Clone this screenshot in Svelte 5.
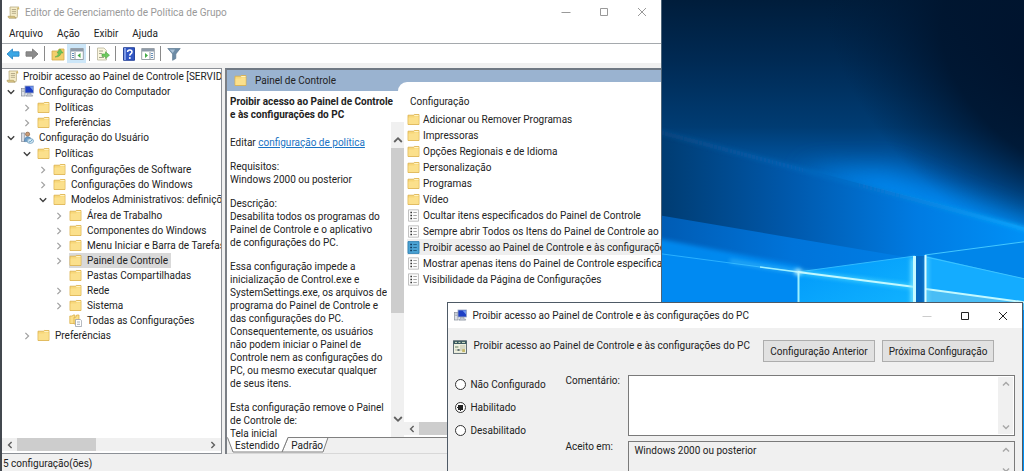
<script>
  const computerChildren = ['Políticas', 'Preferências'];
  const templates = [
    { label: 'Área de Trabalho', chevron: true },
    { label: 'Componentes do Windows', chevron: true },
    { label: 'Menu Iniciar e Barra de Tarefas', chevron: true },
    { label: 'Painel de Controle', chevron: true, selected: true },
    { label: 'Pastas Compartilhadas', chevron: false },
    { label: 'Rede', chevron: true },
    { label: 'Sistema', chevron: true },
    { label: 'Todas as Configurações', chevron: false, icon: 'all' }
  ];
  const folders = [
    'Adicionar ou Remover Programas',
    'Impressoras',
    'Opções Regionais e de Idioma',
    'Personalização',
    'Programas',
    'Vídeo'
  ];
  const settings = [
    'Ocultar itens especificados do Painel de Controle',
    'Sempre abrir Todos os Itens do Painel de Controle ao',
    'Proibir acesso ao Painel de Controle e às configurações',
    'Mostrar apenas itens do Painel de Controle especifica',
    'Visibilidade da Página de Configurações'
  ];
  const policy = 'Proibir acesso ao Painel de Controle e às configurações do PC';
  const states = ['Não Configurado', 'Habilitado', 'Desabilitado'];
  let state = $state('Habilitado');
  let current = $state(2);
  let comment = $state('');
</script>

{#snippet icon(name)}
  {#if name === 'folder'}
    <svg class="icon" viewBox="0 0 13 13" aria-hidden="true">
      <path d="M1 2.200V11.500H12V1.500H7.200L6.400 2.200Z" fill="#f7d779" stroke="#dcb04a" stroke-width=".8" />
      <path d="M1.500 4.500H7L8 3.600H11.600V11H1.500Z" fill="#fbe08c" />
      <path d="M7.500 2H11.500V3H7Z" fill="#fff3c4" />
    </svg>
  {:else if name === 'all'}
    <svg class="icon" viewBox="0 0 13 13" aria-hidden="true">
      <path d="M.8 2V9.5H6V1H4L3.4 2Z" fill="#fbe08c" stroke="#d9ab3c" stroke-width=".7" />
      <path d="M5 3.2V10H10V1H7.6L7 3.2Z" fill="#fbe08c" stroke="#d9ab3c" stroke-width=".7" />
      <path d="M6.5 5.5H11.5L12.6 6.8V12.5H6.5Z" fill="#fff" stroke="#9a9fa8" stroke-width=".8" />
      <path d="M8 8H11M8 10.3H11" stroke="#8b9bb0" stroke-width=".8" />
    </svg>
  {:else if name === 'scroll'}
    <svg class="icon" viewBox="0 0 13 13" aria-hidden="true">
      <path d="M3 1H11.5Q10.4 1.6 10.4 3V10.5Q10.4 12 9 12H2Q3.2 11.4 3.2 10Z" fill="#f5ecc8" stroke="#b9ac80" stroke-width=".8" />
      <path d="M1 10.3H7.6Q7.6 12 9 12H2.2Q1 12 1 10.3Z" fill="#e3cf8d" stroke="#b09c60" stroke-width=".7" />
      <path d="M4.8 3.5H9M4.8 5.4H9M4.8 7.3H9" stroke="#a89d7b" stroke-width=".8" />
      <path d="M10.4 3.4H12.2V2Q12 1 11.2 1Q10.4 1.6 10.4 3.4Z" fill="#d5b968" />
    </svg>
  {:else if name === 'computer'}
    <svg class="icon" viewBox="0 0 13 13" aria-hidden="true">
      <rect x=".6" y="3.4" width="3.4" height="7.6" fill="#dfe2e8" stroke="#858c99" stroke-width=".7" />
      <path d="M1.2 5H3.4M1.2 6.5H3.4" stroke="#8c94a3" stroke-width=".6" />
      <rect x="4" y="1" width="8.4" height="7" fill="#1e3fc4" stroke="#9aa7c4" stroke-width=".8" />
      <path d="M8.500 1.600H12V5.500Z" fill="#6f97ef" />
      <path d="M6.4 8.3H10V10H11.6V11.2H5V10H6.4Z" fill="#c3c8d2" stroke="#858c99" stroke-width=".5" />
    </svg>
  {:else if name === 'user'}
    <svg class="icon" viewBox="0 0 13 13" aria-hidden="true">
      <rect x=".6" y="2" width="3.2" height="8.4" fill="#d8dce4" stroke="#858c99" stroke-width=".7" />
      <circle cx="6.6" cy="3.2" r="2.1" fill="#c99a74" stroke="#7c5a41" stroke-width=".6" />
      <path d="M3.4 10.6Q3.4 5.8 6.8 5.8T9.8 9V10.6Z" fill="#6b9cc9" stroke="#4a789f" stroke-width=".6" />
      <ellipse cx="9.3" cy="10" rx="3.2" ry="2.4" fill="#d9ecf7" stroke="#6d9bbb" stroke-width=".8" />
      <path d="M7.6 10L9 11.2L11.2 8.8" fill="none" stroke="#4c91bd" stroke-width=".8" />
    </svg>
  {:else if name === 'setting'}
    <svg class="icon" viewBox="0 0 13 13" aria-hidden="true">
      <path d="M1.5 .8H11.5V12.2H1.5Z" fill="#fcfcfc" stroke="#b4b4b4" stroke-width=".8" />
      <path d="M3.4 3.5H5M3.4 6.5H5M3.4 9.5H5" stroke="#333" stroke-width="1.4" />
      <path d="M6.3 3.5H9.8M6.3 6.5H9.8M6.3 9.5H9.8" stroke="#9a9a9a" stroke-width=".9" />
    </svg>
  {:else if name === 'settingOn'}
    <svg class="icon" viewBox="0 0 13 13" aria-hidden="true">
      <path d="M1 .6H12V12.4H1Z" fill="#4ba3d4" stroke="#2b7fb2" stroke-width=".9" />
      <path d="M3.2 3.5H5M3.2 6.5H5M3.2 9.5H5" stroke="#123f63" stroke-width="1.5" />
      <path d="M6.3 3.5H9.8M6.3 6.5H9.8M6.3 9.5H9.8" stroke="#23668f" stroke-width="1" />
    </svg>
  {:else if name === 'policy'}
    <svg class="icon" viewBox="0 0 14 14" aria-hidden="true">
      <rect x=".5" y=".8" width="13" height="12.6" fill="#eef0df" stroke="#54636a" stroke-width=".9" />
      <rect x=".5" y=".8" width="13" height="3.2" fill="#3c5a60" />
      <path d="M2 2.4H4M5.5 2.4H7.4M9 2.4H12" stroke="#d5e6c7" stroke-width="1" />
      <path d="M2 6H5.4V8H2Z" fill="#a9b7a0" />
      <path d="M7 6H12.4M7 8H12.4M2 10H12" stroke="#aeb49a" stroke-width=".8" />
      <path d="M4.5 9H6.5V11H4.5Z" fill="#5f6f73" />
      <path d="M9.2 9.2H12V12H9.2Z" fill="#c5b869" />
    </svg>
  {/if}
{/snippet}

{#snippet chevron(kind)}
  <svg class="chevron" viewBox="0 0 10 10" aria-hidden="true">
    {#if kind === 'open'}
      <path d="M1.8 3.3L5 6.5L8.2 3.3" fill="none" stroke="#404040" stroke-width="1.4" />
    {:else if kind === 'closed'}
      <path d="M3.4 1.8L6.6 5L3.4 8.2" fill="none" stroke="#a0a0a0" stroke-width="1.2" />
    {/if}
  </svg>
{/snippet}

{#snippet arrow(direction)}
  <svg class="arrow {direction}" viewBox="0 0 10 10" aria-hidden="true">
    <path d="M1.2 7L5 3.2L8.8 7" fill="none" stroke="currentColor" stroke-width="1.8" />
  </svg>
{/snippet}

{#snippet controls()}
  <div class="controls">
    <button aria-label="Minimizar"><svg viewBox="0 0 10 10"><path class="dim" d="M.5 5.5H9.5" /></svg></button>
    <button aria-label="Maximizar"><svg viewBox="0 0 10 10"><path d="M1.5 1.5H8.5V8.5H1.5Z" /></svg></button>
    <button aria-label="Fechar"><svg viewBox="0 0 10 10"><path d="M1 1L9 9M9 1L1 9" /></svg></button>
  </div>
{/snippet}

<div class="desktop">
  <svg class="wallpaper" viewBox="0 0 1024 471" preserveAspectRatio="xMaxYMin slice" aria-hidden="true">
    <defs>
      <linearGradient id="base" x1="0" y1="0" x2="0" y2="471" gradientUnits="userSpaceOnUse">
        <stop offset="0" stop-color="#001d3b" />
        <stop offset=".13" stop-color="#002a54" />
        <stop offset=".27" stop-color="#003c73" />
        <stop offset=".38" stop-color="#005fb4" />
        <stop offset=".48" stop-color="#0088f0" />
        <stop offset="1" stop-color="#0090f4" />
      </linearGradient>
      <radialGradient id="night" cx="0" cy="0" r="1" gradientUnits="userSpaceOnUse" gradientTransform="translate(1060 70) rotate(38) scale(270 175)">
        <stop offset="0" stop-color="#00122c" />
        <stop offset=".5" stop-color="#00152f" stop-opacity=".9" />
        <stop offset="1" stop-color="#001c3c" stop-opacity="0" />
      </radialGradient>
      <linearGradient id="beam" x1="662" y1="0" x2="1024" y2="0" gradientUnits="userSpaceOnUse">
        <stop offset="0" stop-color="#003c72" />
        <stop offset=".35" stop-color="#0058ab" />
        <stop offset=".7" stop-color="#007be2" />
        <stop offset="1" stop-color="#0090f6" />
      </linearGradient>
      <linearGradient id="edge" x1="662" y1="0" x2="1024" y2="0" gradientUnits="userSpaceOnUse">
        <stop offset="0" stop-color="#0a4c88" />
        <stop offset=".5" stop-color="#0670ca" />
        <stop offset="1" stop-color="#12b0ff" />
      </linearGradient>
      <linearGradient id="low" x1="662" y1="0" x2="925" y2="0" gradientUnits="userSpaceOnUse">
        <stop offset="0" stop-color="#005cb4" />
        <stop offset=".5" stop-color="#0074da" />
        <stop offset="1" stop-color="#007fe6" />
      </linearGradient>
      <linearGradient id="pane" x1="0" y1="0" x2="1" y2="1">
        <stop offset="0" stop-color="#0098fa" />
        <stop offset="1" stop-color="#12b4ff" />
      </linearGradient>
      <filter id="glow" x="650" y="240" width="390" height="80" filterUnits="userSpaceOnUse"><feGaussianBlur stdDeviation="2" /></filter>
      <filter id="soft" x="-20%" y="-20%" width="140%" height="140%"><feGaussianBlur stdDeviation="2" /></filter>
      <filter id="haze" x="-30%" y="-100%" width="160%" height="300%"><feGaussianBlur stdDeviation="14" /></filter>
    </defs>
    <rect width="1024" height="471" fill="url(#base)" />
    <rect width="1024" height="471" fill="url(#night)" />
    <path d="M800 172L890 170L960 202L1060 240V270L900 215Z" fill="#008cf6" opacity=".9" filter="url(#haze)" />
    <path d="M640 125L1030 229V310H640Z" fill="url(#beam)" />
    <path d="M640 127L1030 230" fill="none" stroke="url(#edge)" stroke-width="4" opacity=".8" filter="url(#soft)" />
    <path d="M640 212L905 257L1030 241V310H640Z" fill="url(#low)" />
    <path d="M640 235L800 266V276L640 256Z" fill="#0092fa" opacity=".8" filter="url(#soft)" />
    <path d="M640 251L798 272V310H640Z" fill="#008af2" />
    <path d="M655 253L798 272" stroke="#29b1ff" stroke-width="1" />
    <path d="M730 261L798 272" stroke="#58cfff" stroke-width="3" opacity=".6" filter="url(#glow)" />
    <path d="M760 267L798 272" stroke="#9ff0ff" stroke-width="1.5" />
    <path d="M798 272L915 256V310H798Z" fill="url(#pane)" />
    <path d="M798 272L915 256" stroke="#31bbff" stroke-width="1" />
    <path d="M798 272L915 287" stroke="#59e0ff" stroke-width="4" opacity=".7" filter="url(#glow)" />
    <path d="M798 272L915 287" stroke="#c2f8ff" stroke-width="2" />
    <path d="M798.500 272V310" stroke="#9beeff" stroke-width="2" />
    <circle cx="798" cy="272" r="3" fill="#d5fbff" filter="url(#glow)" />
    <path d="M911 258H915V310H911Z" fill="#7be6ff" filter="url(#glow)" />
    <path d="M914.500 256V310" stroke="#c6faff" stroke-width="3" />
    <path d="M916 256H924V310H916Z" fill="#0568c0" />
    <path d="M925 255L1030 241V310H925Z" fill="#0086ea" />
    <path d="M926 256L1030 280V310H926Z" fill="#14acff" />
    <path d="M926 289L1030 303V310H926Z" fill="#49bdf5" />
    <path d="M926 257L1030 280" stroke="#3fc4ff" stroke-width="1" />
    <path d="M925 255L1030 241" stroke="#43c8ff" stroke-width="1" />
    <path d="M926 289L1030 303" stroke="#c2f8ff" stroke-width="2" />
    <path d="M926 257H928V310H926Z" fill="#6edfff" filter="url(#glow)" />
    <path d="M925.500 255V310" stroke="#dcfdff" stroke-width="2" />
  </svg>

  <section class="editor">
    <header class="titlebar inactive">
      {@render icon('scroll')}
      <h1>Editor de Gerenciamento de Política de Grupo</h1>
      {@render controls()}
    </header>
    <nav class="menu">
      <button>Arquivo</button><button>Ação</button><button>Exibir</button><button>Ajuda</button>
    </nav>
    <div class="toolbar">
      <button aria-label="Voltar"><svg viewBox="0 0 14 14"><path d="M1 7L6.500 2V4.800H13V9.200H6.500V12Z" fill="#3ba7e5" stroke="#2b88c6" stroke-width=".9" /></svg></button>
      <button aria-label="Avançar"><svg viewBox="0 0 14 14"><path d="M13 7L7.500 2V4.800H1V9.200H7.500V12Z" fill="#8c8c8c" stroke="#7c7c7c" stroke-width=".9" /></svg></button>
      <i></i>
      <button aria-label="Subir um nível"><svg viewBox="0 0 14 14"><path d="M1 4V13H13V2H8L7 4Z" fill="#f3cf6c" stroke="#d3a94b" stroke-width=".8" /><path d="M4 10Q7.500 9 7.500 6H6L9 2L12 6H10Q9.500 10 4 10Z" fill="#6cc45a" stroke="#4ba543" stroke-width=".5" /></svg></button>
      <button class="pressed" aria-label="Mostrar árvore"><svg viewBox="0 0 14 14"><path d="M.7 1.500H13.300V12.500H.7Z" fill="#fff" stroke="#8e979f" stroke-width=".9" /><path d="M1 2H13V4.500H1Z" fill="#8e9baa" /><path d="M5 5V12.500" stroke="#8e979f" /><path d="M2 6.500H4M2 8.500H4M2 10.500H4" stroke="#4f7fb0" stroke-width=".9" /><path d="M10.500 6V11L7.500 8.500Z" fill="#43ab46" /></svg></button>
      <i></i>
      <button aria-label="Exportar lista"><svg viewBox="0 0 14 14"><path d="M1.500 1H8L10.500 3.500V13H1.500Z" fill="#fbf7df" stroke="#b9b59c" stroke-width=".8" /><path d="M3 4H7M3 6.500H6M3 10.500H8" stroke="#9a9a86" stroke-width=".9" /><path d="M6 7H9.500V4.800L13.500 8.200L9.500 11.600V9.400H6Z" fill="#6fca5c" stroke="#4ba543" stroke-width=".6" /></svg></button>
      <i></i>
      <button aria-label="Ajuda"><svg viewBox="0 0 14 14"><path d="M1.500 .7H12.500V13.300H1.500Z" fill="#3257c4" stroke="#1c3a94" stroke-width=".9" /><path d="M2 1H4V13H2Z" fill="#7f9be6" /><path d="M5.600 5Q5.600 3 7.800 3T10 5Q10 6.200 8.600 7Q7.800 7.500 7.800 8.800" fill="none" stroke="#fff" stroke-width="1.500" /><circle cx="7.800" cy="11" r="1" fill="#fff" /></svg></button>
      <button aria-label="Mostrar ações"><svg viewBox="0 0 14 14"><path d="M.7 1.500H13.300V12.500H.7Z" fill="#fff" stroke="#8e979f" stroke-width=".9" /><path d="M1 2H13V4.500H1Z" fill="#8e9baa" /><path d="M9 5V12.500" stroke="#8e979f" /><path d="M10 6.500H12M10 8.500H12M10 10.500H12" stroke="#4f7fb0" stroke-width=".9" /><path d="M4 6V11L7 8.500Z" fill="#43ab46" /></svg></button>
      <i></i>
      <button aria-label="Filtrar"><svg viewBox="0 0 14 14"><path d="M.8 1.500H13.200L8.800 7V11.500L5.600 13.300V7Z" fill="#6c8ba6" stroke="#5b7890" stroke-width=".7" /><path d="M2.500 2.500H8L5.800 6Z" fill="#a9c1d6" /></svg></button>
    </div>

    <div class="panes">
      <aside class="tree">
        <ul class="root">
          <li>
            <div class="row top">{@render icon('scroll')}<span>Proibir acesso ao Painel de Controle [SERVIDO</span></div>
            <ul>
              <li>
                <div class="row">{@render chevron('open')}<span class="node">{@render icon('computer')}Configuração do Computador</span></div>
                <ul>
                  {#each computerChildren as label}
                    <li><div class="row">{@render chevron('closed')}<span class="node">{@render icon('folder')}{label}</span></div></li>
                  {/each}
                </ul>
              </li>
              <li>
                <div class="row">{@render chevron('open')}<span class="node">{@render icon('user')}Configuração do Usuário</span></div>
                <ul>
                  <li>
                    <div class="row">{@render chevron('open')}<span class="node">{@render icon('folder')}Políticas</span></div>
                    <ul>
                      <li><div class="row">{@render chevron('closed')}<span class="node">{@render icon('folder')}Configurações de Software</span></div></li>
                      <li><div class="row">{@render chevron('closed')}<span class="node">{@render icon('folder')}Configurações do Windows</span></div></li>
                      <li>
                        <div class="row">{@render chevron('open')}<span class="node">{@render icon('folder')}Modelos Administrativos: definiçõ</span></div>
                        <ul>
                          {#each templates as item}
                            <li>
                              <div class="row">
                                {@render chevron(item.chevron ? 'closed' : 'none')}<span class="node" class:selected={item.selected}>{@render icon(item.icon ?? 'folder')}{item.label}</span>
                              </div>
                            </li>
                          {/each}
                        </ul>
                      </li>
                    </ul>
                  </li>
                  <li><div class="row">{@render chevron('closed')}<span class="node">{@render icon('folder')}Preferências</span></div></li>
                </ul>
              </li>
            </ul>
          </li>
        </ul>
        <div class="hscroll tree-scroll">{@render arrow('left')}<div class="track"><div class="thumb"></div></div>{@render arrow('right')}</div>
      </aside>

      <main class="result">
        <div class="banner">{@render icon('folder')}<h2>Painel de Controle</h2></div>
        <div class="columns">
          <div class="details">
            <h3>Proibir acesso ao Painel de Controle<br />e às configurações do PC</h3>
            <div class="scroller">
              <div class="copy">
                <p>Editar <a href="#politica">configuração de política</a></p>
                <p>Requisitos:<br />Windows 2000 ou posterior</p>
                <p>Descrição:<br />Desabilita todos os programas do<br />Painel de Controle e o aplicativo<br />de configurações do PC.</p>
                <p>Essa configuração impede a<br />inicialização de Control.exe e<br />SystemSettings.exe, os arquivos de<br />programa do Painel de Controle e<br />das configurações do PC.<br />Consequentemente, os usuários<br />não podem iniciar o Painel de<br />Controle nem as configurações do<br />PC, ou mesmo executar qualquer<br />de seus itens.</p>
                <p>Esta configuração remove o Painel<br />de Controle de:<br />Tela inicial</p>
              </div>
              <div class="vscroll">{@render arrow('up')}<div class="track"><div class="thumb"></div></div>{@render arrow('down')}</div>
            </div>
          </div>
          <div class="list">
            <div class="heading">Configuração</div>
            <ul>
              {#each folders as label}
                <li>{@render icon('folder')}<span>{label}</span></li>
              {/each}
              {#each settings as label, i}
                <li class:current={i === current}>{@render icon(i === current ? 'settingOn' : 'setting')}<span>{label}</span></li>
              {/each}
            </ul>
            <div class="hscroll list-scroll">{@render arrow('left')}<div class="track"><div class="thumb"></div></div>{@render arrow('right')}</div>
          </div>
        </div>
        <div class="tabs">
          <svg viewBox="0 0 102 16" aria-hidden="true">
            <path d="M55 15L61 .5H101L96 15Z" fill="#fafafa" stroke="#808080" />
            <path d="M0 0L6 15H55L61 0Z" fill="#fff" />
            <path d="M.5 .5L6 15H55L61 .5" fill="none" stroke="#808080" />
          </svg>
          <button>Estendido</button><button>Padrão</button>
        </div>
      </main>
    </div>
    <footer>5 configuração(ões)</footer>
  </section>

  <section class="dialog">
    <header class="titlebar">
      {@render icon('computer')}
      <h1>{policy}</h1>
      {@render controls()}
    </header>
    <div class="policy-head">
      {@render icon('policy')}
      <span class="name">{policy}</span>
      <div class="nav"><button>Configuração Anterior</button><button>Próxima Configuração</button></div>
    </div>
    <div class="form">
      <div class="radios">
        {#each states as label}
          <label><input type="radio" name="state" value={label} bind:group={state} />{label}</label>
        {/each}
      </div>
      <div class="fields">
        <label for="comment">Comentário:</label>
        <div class="box">
          <textarea id="comment" bind:value={comment}></textarea>
          <div class="mini">{@render arrow('up')}{@render arrow('down')}</div>
        </div>
        <label for="supported">Aceito em:</label>
        <div class="box gray">
          <textarea id="supported" readonly value="Windows 2000 ou posterior"></textarea>
          <div class="mini short">{@render arrow('up')}{@render arrow('down')}</div>
        </div>
      </div>
    </div>
  </section>
</div>

<style>
  :global(body) { margin: 0; }
  * { box-sizing: border-box; }
  .desktop {
    position: relative;
    height: 100vh;
    overflow: hidden;
    background: #00203f;
    color: #222;
    font: 10px/15px Roboto, "Open Sans", sans-serif;
    white-space: nowrap;
  }
  .wallpaper { position: absolute; inset: 0; width: 100%; height: 100%; }
  ul { margin: 0; padding: 0; list-style: none; }
  h1, h2, h3, p { margin: 0; font-size: inherit; font-weight: 400; }
  button { padding: 0; border: 0; background: none; color: inherit; font: inherit; }
  svg { display: block; flex: none; }
  .icon { width: 13px; height: 13px; }
  .chevron, .arrow { width: 10px; height: 10px; }
  .arrow.left { transform: rotate(-90deg); }
  .arrow.right { transform: rotate(90deg); }
  .arrow.down { transform: rotate(180deg); }

  .editor {
    position: absolute;
    inset: 0 35.4% 0 0;
    display: flex;
    flex-direction: column;
    border-left: 2px solid #43484f;
    border-right: 1px solid #4d6478;
    background: #f0f0f0;
  }
  .titlebar {
    display: flex;
    flex: none;
    align-items: center;
    gap: 5px;
    height: 24px;
    padding-left: 5px;
    background: #fff;
  }
  .inactive { color: #999; }
  .controls { display: flex; margin-left: auto; }
  .controls button { display: grid; place-items: center; width: 38px; height: 22px; }
  .controls svg { width: 10px; height: 10px; fill: none; stroke: currentColor; }
  .menu { display: flex; flex: none; gap: 14px; height: 19px; padding-left: 7px; background: #fff; }
  .toolbar {
    display: flex;
    flex: none;
    align-items: center;
    height: 20px;
    padding-left: 1px;
    border-top: 1px solid #a5a9ad;
    background: #fff;
  }
  .toolbar button { display: grid; place-items: center; width: 19px; height: 19px; }
  .toolbar svg { width: 14px; height: 14px; }
  .toolbar .pressed { background: #cce6f8; }
  .toolbar i { width: 1px; height: 15px; margin: 0 3px; background: #8a8a8a; }

  .panes { display: flex; flex: 1; gap: 3px; min-height: 0; padding-top: 5px; }
  .tree {
    display: flex;
    flex: 0 0 220px;
    flex-direction: column;
    overflow: hidden;
    border: 1px solid #8c9096;
    border-left: 0;
    background: #fff;
  }
  .root { flex: 1; overflow: hidden; }
  .tree ul ul ul { padding-top: 1px; padding-left: 16px; }
  .row { display: flex; align-items: center; gap: 5px; height: 15px; padding-left: 4px; }
  .top { gap: 4px; }
  .node { display: flex; align-items: center; gap: 5px; padding-right: 3px; }
  .selected { background: #d9d9d9; }
  .hscroll { display: flex; flex: none; align-items: center; height: 13px; background: #f0f0f0; color: #606060; }
  .hscroll .track { flex: 1; height: 100%; margin: 0 3px; }
  .hscroll .thumb { height: 100%; background: #cdcdcd; }
  .hscroll .arrow { width: 8px; height: 8px; }
  .tree-scroll { margin-bottom: 2px; padding: 0 4px; }
  .tree-scroll .thumb { width: 42%; }

  .result {
    display: flex;
    flex: 1;
    flex-direction: column;
    min-width: 0;
    border-top: 2px solid #6f7883;
    border-left: 2px solid #7b7f85;
  }
  .banner { display: flex; flex: none; align-items: center; gap: 8px; height: 21px; padding-left: 7px; background: #9ab3d0; }
  .columns { display: flex; flex: 1; min-height: 0; background: #fff; }
  .details { display: flex; flex: 0 0 177px; flex-direction: column; min-width: 0; padding-left: 3px; line-height: 13px; }
  h3 { flex: none; height: 31px; padding-top: 4px; font-weight: 700; }
  .scroller { display: flex; flex: 1; justify-content: space-between; min-height: 0; }
  .copy { display: flex; flex-direction: column; gap: 11px; padding-top: 14px; overflow: hidden; }
  .copy a { color: #1a73c4; }
  .vscroll { display: flex; flex-direction: column; align-items: center; width: 13px; padding: 13px 0; background: #f0f0f0; color: #606060; }
  .vscroll .track { flex: 1; width: 100%; padding-top: 3px; }
  .vscroll .thumb { height: 62%; background: #cdcdcd; }
  .list { display: flex; flex: 1; flex-direction: column; min-width: 0; }
  .list::before { content: ""; height: 9px; margin-top: -9px; margin-left: -6px; border-top-left-radius: 9px; background: #fff; }
  .heading { padding: 3px 0 2px 6px; }
  .list ul { flex: 1; margin-left: 3px; overflow: hidden; }
  .list li { display: flex; align-items: center; gap: 3px; height: 16px; }
  .current { background: #efefef; }
  .list-scroll { margin-bottom: 2px; padding-left: 4px; }
  .list-scroll .thumb { width: 60%; }
  .tabs { position: relative; display: flex; flex: none; gap: 12px; height: 17px; padding-left: 8px; border-top: 1px solid #808080; border-bottom: 1px solid #d8d8d8; }
  .tabs svg { position: absolute; top: -1px; left: 0; width: 102px; height: 16px; }
  .tabs button { position: relative; line-height: 15px; }
  footer { flex: none; height: 17px; padding-top: 2px; padding-left: 1px; }

  .dialog {
    position: absolute;
    inset: 302px 1px -40px 43.7%;
    border: 1px solid #4e5a66;
    background: #f0f0f0;
  }
  .dialog .titlebar { height: 25px; padding-left: 6px; }
  .dialog .controls .dim { stroke: #ccc; }
  .policy-head { display: flex; padding: 12px 28px 0 5px; }
  .policy-head .icon { width: 14px; height: 14px; }
  .policy-head .name { margin-left: 6px; line-height: 11px; }
  .nav { display: flex; gap: 7px; margin-left: auto; }
  .nav button { width: 112px; height: 22px; border: 1px solid #adadad; background: #e1e1e1; }
  .form { display: flex; padding: 13px 7px 0 7px; }
  .radios { display: flex; flex: 0 0 110px; flex-direction: column; gap: 8px; padding-top: 2px; }
  .radios label { display: flex; align-items: center; gap: 4px; height: 15px; }
  input { appearance: none; width: 11px; height: 11px; margin: 0; border: 1px solid #333; border-radius: 50%; background: #fff; }
  input:checked { background: radial-gradient(circle, #222 0 3px, #fff 3px); }
  .fields { display: grid; flex: 1; grid-template-columns: 63px 1fr; row-gap: 5px; line-height: 11px; }
  .box { display: flex; height: 61px; padding: 1px; border: 1px solid #7a7a7a; background: #fff; }
  .gray { background: #f0f0f0; }
  textarea { flex: 1; min-width: 0; padding: 1px 4px; border: 0; outline: 0; resize: none; overflow: hidden; background: none; color: inherit; font: 10px/13px Roboto, "Open Sans", sans-serif; }
  .mini { display: flex; flex-direction: column; justify-content: space-between; align-items: center; width: 15px; padding: 3px 0; background: #f0f0f0; color: #a8a8a8; }
  .mini .arrow { width: 8px; height: 8px; }
  .short { height: 34px; }
</style>
